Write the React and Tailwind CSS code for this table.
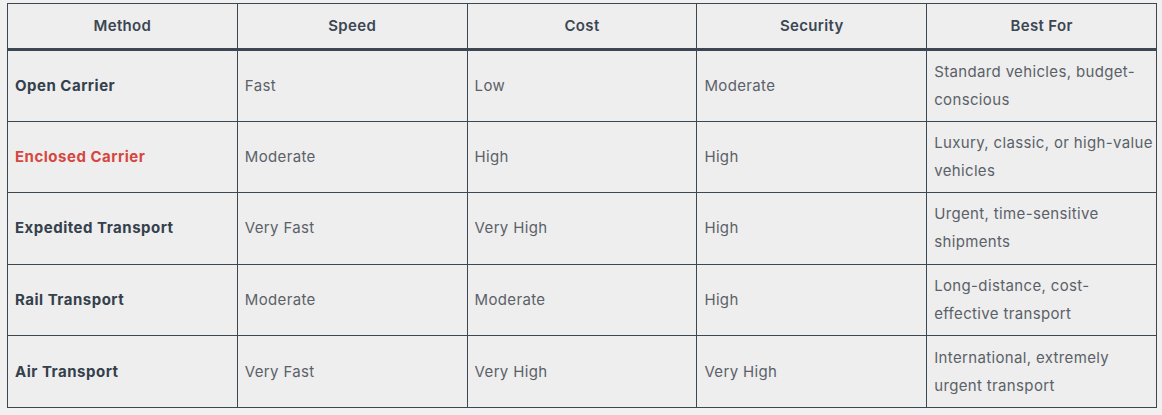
import React from 'react';

const rows = [
    { method: 'Open Carrier', speed: 'Fast', cost: 'Low', security: 'Moderate', best: ['Standard vehicles, budget-', 'conscious'] },
    { method: 'Enclosed Carrier', speed: 'Moderate', cost: 'High', security: 'High', best: ['Luxury, classic, or high-value', 'vehicles'], highlight: true },
    { method: 'Expedited Transport', speed: 'Very Fast', cost: 'Very High', security: 'High', best: ['Urgent, time-sensitive', 'shipments'] },
    { method: 'Rail Transport', speed: 'Moderate', cost: 'Moderate', security: 'High', best: ['Long-distance, cost-', 'effective transport'] },
    { method: 'Air Transport', speed: 'Very Fast', cost: 'Very High', security: 'Very High', best: ['International, extremely', 'urgent transport'] },
];

const headers = ['Method', 'Speed', 'Cost', 'Security', 'Best For'];

const App = () => {
    return (
        <div className="w-[1162px] h-[415px] bg-[#f0f0f0] pt-[3px] pl-[7px] font-['Inter',sans-serif]">
            <table className="w-[1150px] table-fixed border-collapse bg-[#eeeeee] text-[15px] leading-[28px] tracking-[0.35px]">
                <thead>
                    <tr className="border-b-[3px] border-[#3c4752]">
                        {headers.map((h) => (
                            <th key={h} className="h-[44px] border border-[#3c4752] px-2 py-2 text-center font-semibold text-[#3b4652]">
                                {h}
                            </th>
                        ))}
                    </tr>
                </thead>
                <tbody>
                    {rows.map((r) => (
                        <tr key={r.method} className="h-[71.6px]">
                            <td className={`border border-[#3c4752] pl-[7px] pr-2 py-1 font-bold tracking-[0.5px] ${r.highlight ? "text-[#d6473f]" : "text-[#34404b]"}`}>{r.method}</td>
                            <td className="border border-[#3c4752] pl-[7px] pr-2 py-1 text-[#5b6168]">{r.speed}</td>
                            <td className="border border-[#3c4752] pl-[7px] pr-2 py-1 text-[#5b6168]">{r.cost}</td>
                            <td className="border border-[#3c4752] pl-[7px] pr-2 py-1 text-[#5b6168]">{r.security}</td>
                            <td className="border border-[#3c4752] pl-[7px] pr-2 py-1 text-[#5b6168] whitespace-nowrap">
                                {r.best[0]}<br />{r.best[1]}
                            </td>
                        </tr>
                    ))}
                </tbody>
            </table>
        </div>
    );
};

export default App;
